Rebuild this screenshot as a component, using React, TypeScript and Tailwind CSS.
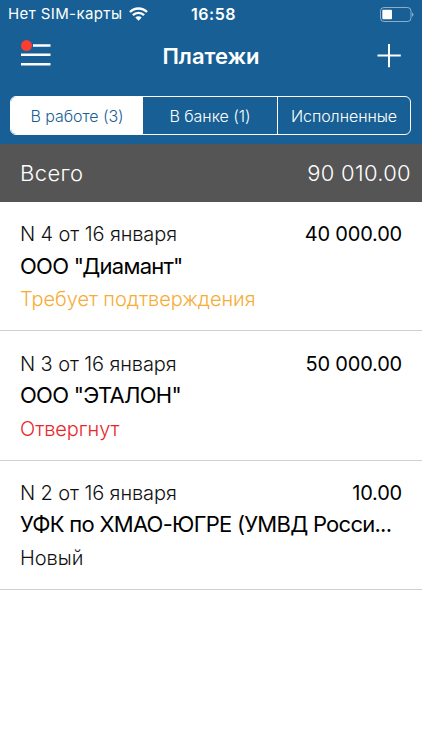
const payments = [
  { id: 4, title: 'N 4 от 16 января', amount: '40 000.00', name: 'ООО "Диамант"', status: 'Требует подтверждения', color: 'text-[#f5ad35]' },
  { id: 3, title: 'N 3 от 16 января', amount: '50 000.00', name: 'ООО "ЭТАЛОН"', status: 'Отвергнут', color: 'text-[#e8262a]' },
  { id: 2, title: 'N 2 от 16 января', amount: '10.00', name: 'УФК по ХМАО-ЮГРЕ (УМВД Росси...', status: 'Новый', color: 'text-[#111111]' },
]

function StatusBar() {
  return (
    <div className="relative flex h-7 items-center justify-between px-2 text-[15px] text-white">
      <div className="flex items-center gap-[7px]">
        <span className="tracking-[0.4px]">Нет SIM-карты</span>
        <svg width="19" height="14" viewBox="0 0 19 14" fill="none" stroke="currentColor" strokeWidth="2.4">
          <path d="M1 5a12 12 0 0 1 17 0" />
          <path d="M3.9 8.2a7.9 7.9 0 0 1 11.2 0" />
          <path d="M6.3 10.6a4.6 4.6 0 0 1 6.4 0L9.5 13.8z" fill="currentColor" stroke="none" />
        </svg>
      </div>
      <span className="absolute inset-x-0 pl-[5px] text-center text-base font-semibold tracking-[0.5px]">16:58</span>
      <svg width="36" height="15" viewBox="0 0 36 15" fill="none">
        <rect x="2.5" y="0.5" width="30.5" height="14" rx="3.5" stroke="#fff" strokeOpacity="0.5" />
        <rect x="4.3" y="2.7" width="9.7" height="9.6" rx="1" fill="#fff" />
        <path d="M34 5.5c2 .8 2 3.4 0 4.2z" fill="#fff" fillOpacity="0.5" />
      </svg>
    </div>
  )
}

export default function App() {
  return (
    <div className="h-[750px] w-[422px] overflow-hidden bg-white font-['Inter','Liberation_Sans',sans-serif]">
      <header className="h-36 bg-[#175f94] text-white">
        <StatusBar />
        <div className="relative flex h-[56px] items-center justify-between px-5">
          <svg className="overflow-visible" width="32" height="28" viewBox="0 0 32 28">
            <path d="M13 3.5h17.5M1 12.7h29.5M1 22.2h29.5" stroke="#fff" strokeWidth="2.4" />
            <circle cx="6.5" cy="3.6" r="5.5" fill="#fc3d32" />
          </svg>
          <h1 className="absolute inset-x-0 text-center text-[22px] font-semibold">Платежи</h1>
          <svg className="-mt-0.5" width="25" height="25" viewBox="0 0 25 25" stroke="#fff" strokeWidth="2">
            <path d="M12 1v23.3M.5 12.5h23.3" />
          </svg>
        </div>
        <div className="mr-[11px] ml-[10px] mt-3 flex h-[38.5px] overflow-hidden rounded-[6px] border border-white text-base font-light">
          <button className="w-[132px] bg-white pt-0.5 tracking-[-0.05px] text-[#175f94]">В работе (3)</button>
          <button className="w-[135px] border-r border-white pt-0.5 tracking-[-0.05px]">В банке (1)</button>
          <button className="flex-1 pt-0.5 tracking-[-0.05px]">Исполненные</button>
        </div>
      </header>

      <div className="flex h-[58px] items-center justify-between bg-[#555555] pr-[11px] pl-5 text-[22px] font-light text-white">
        <span className="tracking-[0.4px]">Всего</span>
        <span className="tracking-[0.3px]">90 010.00</span>
      </div>

      {/* Список платежей */}
      <ul>
        {payments.map((p) => (
          <li key={p.id} className="h-[129.3px] border-b border-[#d0d0d0] px-5 pt-[16.4px] whitespace-nowrap">
            <div className="flex h-8 items-center justify-between text-xl">
              <span className="font-light tracking-[-0.1px] text-[#111111]">{p.title}</span>
              <span className="tracking-[-0.2px]">{p.amount}</span>
            </div>
            <div className="flex h-8 items-center text-[22px] tracking-[-0.73px]">{p.name}</div>
            <div className={`flex h-[34px] items-center text-xl font-light tracking-[-0.05px] ${p.color}`}>{p.status}</div>
          </li>
        ))}
      </ul>
    </div>
  )
}
